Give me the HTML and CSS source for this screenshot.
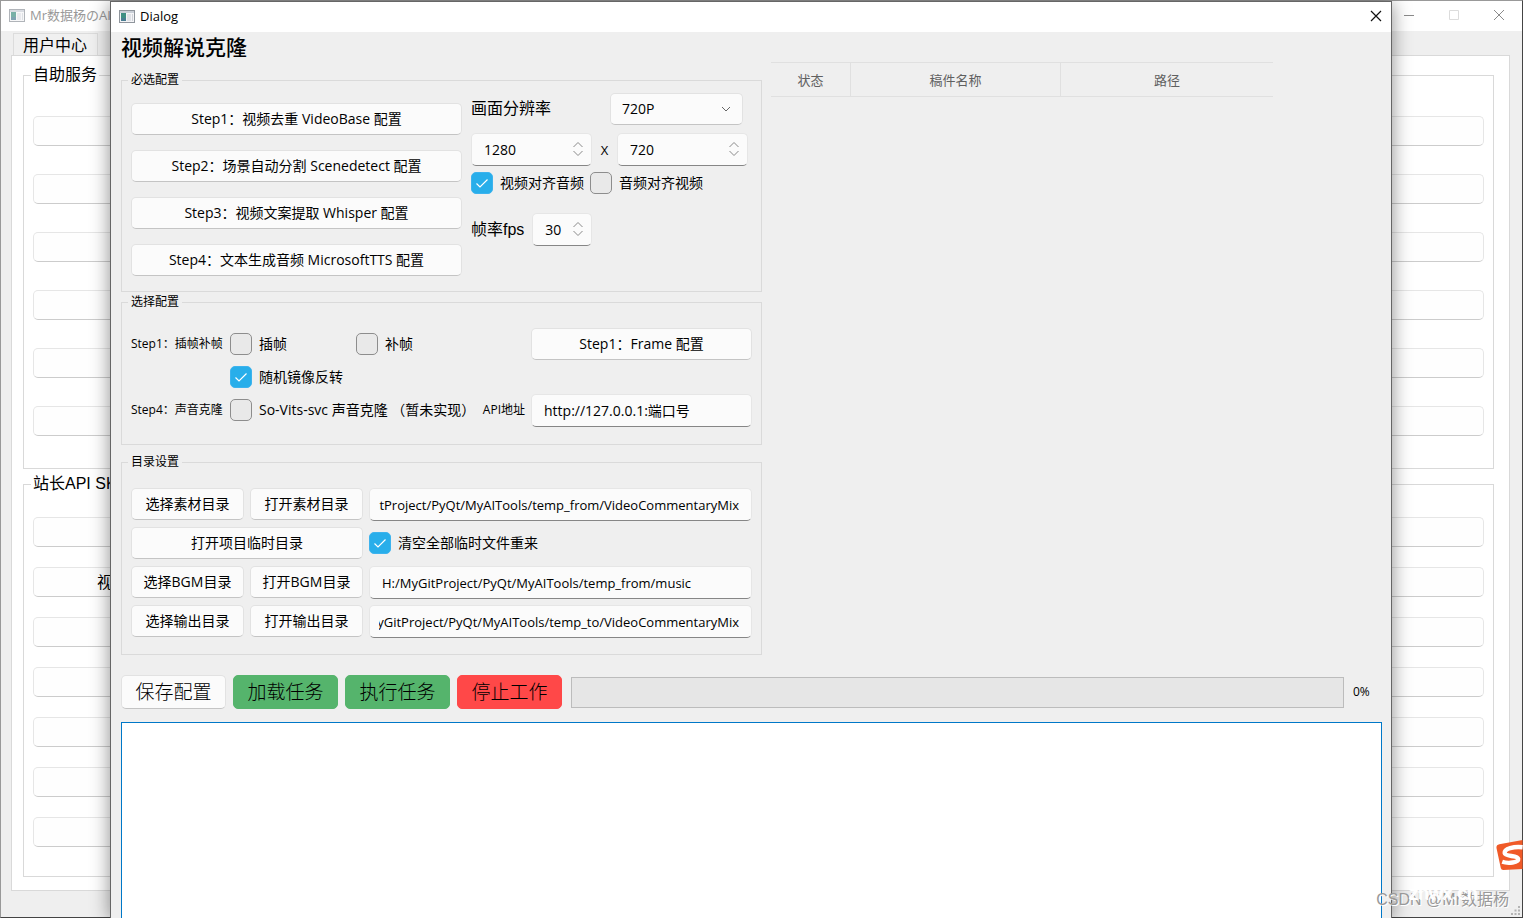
FILE: index.html
```html
<!DOCTYPE html>
<html lang="zh-CN">
<head>
<meta charset="utf-8">
<title>Dialog</title>
<link rel="stylesheet" href="styles.css">
</head>
<body>
<svg class="defs" aria-hidden="true">
  <symbol id="app-icon" viewBox="0 0 16 13">
    <rect x="0.5" y="0.5" width="15" height="12" fill="#f4f4f6" stroke="#8f959c"/>
    <rect x="1" y="1" width="14" height="2" fill="#c9ced6"/>
    <rect x="2" y="3" width="5" height="8" fill="#3f8f83"/>
    <rect x="2" y="8" width="5" height="3" fill="#4a7d92"/>
    <rect x="8" y="4" width="4" height="7" fill="#dfe1e6"/>
    <rect x="13" y="4" width="1" height="7" fill="#d0d3d9"/>
  </symbol>
  <symbol id="spin" viewBox="0 0 12 16">
    <path d="M1.5 6 6 1.5 10.500 6M1.500 10 6 14.500 10.500 10" fill="none" stroke="#8a8a8a"/>
  </symbol>
</svg>

<main class="main-window">
  <header class="title-bar title-bar-inactive">
    <svg class="app-icon"><use href="#app-icon"/></svg>
    <span class="title-text">Mr数据杨のAI工</span>
    <button class="window-button" type="button" aria-label="最小化"><svg viewBox="0 0 12 12"><path d="M1 6.500H11" stroke="#8a8a8a"/></svg></button>
    <button class="window-button" type="button" aria-label="最大化"><svg viewBox="0 0 12 12"><path d="M1.500 1.500H10.500V10.500H1.500Z" fill="none" stroke="#dcdcdc"/></svg></button>
    <button class="window-button" type="button" aria-label="关闭"><svg viewBox="0 0 12 12"><path d="M1 1 11 11M11 1 1 11" stroke="#8a8a8a"/></svg></button>
  </header>
  <nav class="tabs"><button class="tab" type="button">用户中心</button></nav>
  <section class="tab-pane">
    <fieldset class="panel panel-service">
      <legend>自助服务</legend>
      <button class="wide-button" type="button" aria-label="服务 1"></button>
      <button class="wide-button" type="button" aria-label="服务 2"></button>
      <button class="wide-button" type="button" aria-label="服务 3"></button>
      <button class="wide-button" type="button" aria-label="服务 4"></button>
      <button class="wide-button" type="button" aria-label="服务 5"></button>
      <button class="wide-button" type="button" aria-label="服务 6"></button>
    </fieldset>
    <fieldset class="panel panel-api">
      <legend>站长API SK</legend>
      <button class="wide-button" type="button" aria-label="接口 1"></button>
      <button class="wide-button" type="button">视</button>
      <button class="wide-button" type="button" aria-label="接口 3"></button>
      <button class="wide-button" type="button" aria-label="接口 4"></button>
      <button class="wide-button" type="button" aria-label="接口 5"></button>
      <button class="wide-button" type="button" aria-label="接口 6"></button>
      <button class="wide-button" type="button" aria-label="接口 7"></button>
    </fieldset>
  </section>
  <svg class="grip" viewBox="0 0 10 10" aria-hidden="true"><path d="M7 0h2v2H7zM3.500 3.500h2v2h-2zM7 3.500h2v2H7zM0 7h2v2H0zM3.500 7h2v2h-2zM7 7h2v2H7z" fill="#b4b4b4"/></svg>
</main>

<section class="dialog" role="dialog" aria-label="Dialog">
  <header class="title-bar">
    <svg class="app-icon"><use href="#app-icon"/></svg>
    <span class="title-text">Dialog</span>
    <button class="close-button" type="button" aria-label="关闭"><svg viewBox="0 0 12 12"><path d="M1 1 11 11M11 1 1 11" stroke="#111" stroke-width="1.200"/></svg></button>
  </header>
  <div class="dialog-body">
    <h1>视频解说克隆</h1>
    <div class="columns">
      <div class="settings">
        <fieldset class="group group-required">
          <legend>必选配置</legend>
          <div class="step-buttons">
            <button class="button" type="button">Step1：视频去重 VideoBase 配置</button>
            <button class="button" type="button">Step2：场景自动分割 Scenedetect 配置</button>
            <button class="button" type="button">Step3：视频文案提取 Whisper 配置</button>
            <button class="button" type="button">Step4：文本生成音频 MicrosoftTTS 配置</button>
          </div>
          <div class="video-options">
            <div class="row row-resolution">
              <label class="big-label" for="resolution">画面分辨率</label>
              <span class="select-wrap">
                <select class="select" id="resolution"><option>720P</option></select>
                <svg class="chevron" viewBox="0 0 10 6"><path d="M1 1 5 5 9 1" fill="none" stroke="#666"/></svg>
              </span>
            </div>
            <div class="row row-size">
              <span class="spin-wrap spin-width"><input class="field" type="number" value="1280" aria-label="宽度"><svg class="spin"><use href="#spin"/></svg></span>
              <span class="times">X</span>
              <span class="spin-wrap spin-height"><input class="field" type="number" value="720" aria-label="高度"><svg class="spin"><use href="#spin"/></svg></span>
            </div>
            <div class="row row-align">
              <label class="check"><input type="checkbox" checked>视频对齐音频</label>
              <label class="check"><input type="checkbox">音频对齐视频</label>
            </div>
            <div class="row row-fps">
              <label class="big-label" for="fps">帧率fps</label>
              <span class="spin-wrap spin-fps"><input class="field" id="fps" type="number" value="30"><svg class="spin"><use href="#spin"/></svg></span>
            </div>
          </div>
        </fieldset>

        <fieldset class="group group-optional">
          <legend>选择配置</legend>
          <div class="option-row">
            <span class="small-label">Step1：插帧补帧</span>
            <label class="check check-column"><input type="checkbox">插帧</label>
            <label class="check"><input type="checkbox">补帧</label>
            <button class="button option-end" type="button">Step1：Frame 配置</button>
          </div>
          <div class="option-row">
            <span class="small-label"></span>
            <label class="check"><input type="checkbox" checked>随机镜像反转</label>
          </div>
          <div class="option-row">
            <span class="small-label">Step4：声音克隆</span>
            <label class="check"><input type="checkbox">So-Vits-svc 声音克隆 （暂未实现）</label>
            <label class="api-label" for="api">API地址</label>
            <input class="field option-field" id="api" type="text" value="http://127.0.0.1:端口号">
          </div>
        </fieldset>

        <fieldset class="group group-folders">
          <legend>目录设置</legend>
          <button class="button" type="button">选择素材目录</button>
          <button class="button" type="button">打开素材目录</button>
          <input class="field field-path field-end" type="text" aria-label="素材目录" value="H:/MyGitProject/PyQt/MyAITools/temp_from/VideoCommentaryMix">
          <button class="button button-span" type="button">打开项目临时目录</button>
          <label class="check"><input type="checkbox" checked>清空全部临时文件重来</label>
          <button class="button" type="button">选择BGM目录</button>
          <button class="button" type="button">打开BGM目录</button>
          <input class="field field-path" type="text" aria-label="BGM目录" value="H:/MyGitProject/PyQt/MyAITools/temp_from/music">
          <button class="button" type="button">选择输出目录</button>
          <button class="button" type="button">打开输出目录</button>
          <input class="field field-path field-end" type="text" aria-label="输出目录" value="H:/MyGitProject/PyQt/MyAITools/temp_to/VideoCommentaryMix">
        </fieldset>
      </div>

      <table class="drafts">
        <thead><tr><th class="col-state">状态</th><th class="col-name">稿件名称</th><th class="col-path">路径</th></tr></thead>
      </table>
    </div>

    <div class="actions">
      <button class="button action" type="button">保存配置</button>
      <button class="button action action-go" type="button">加载任务</button>
      <button class="button action action-go" type="button">执行任务</button>
      <button class="button action action-stop" type="button">停止工作</button>
      <div class="progress" role="progressbar" aria-valuenow="0" aria-label="进度"></div>
      <span class="percent">0%</span>
    </div>
    <textarea class="log" aria-label="日志"></textarea>
  </div>
</section>

<svg class="ime-logo" viewBox="0 0 27 32" aria-hidden="true">
  <path d="M3 4.500 27 0V30L7 31Q5 31 4.500 29L0 8Q0 5 3 4.500Z" fill="#f05a28"/>
  <path d="M27 7.500C18 6.500 8 9 8.500 13.500C9 17.500 22 15.500 22.500 19.500C23 23.500 12 24.500 6 22.500" fill="none" stroke="#fff" stroke-width="4.500"/>
</svg>
<div class="watermark"><span class="watermark-light">znwx.cn</span>CSDN @Mr数据杨</div>
</body>
</html>
```

FILE: styles.css
```css
* {
  box-sizing: border-box;
}

body {
  position: relative;
  height: 100vh;
  margin: 0;
  overflow: hidden;
  color: #000;
  background: #efefef;
  font: 14px/20px "Open Sans", "Noto Sans CJK SC", sans-serif;
}

button,
input,
select,
textarea {
  margin: 0;
  color: inherit;
  font: inherit;
}

fieldset {
  min-width: 0;
  margin: 0;
}

.defs {
  position: absolute;
  width: 0;
  height: 0;
}

/* Main window */
.main-window {
  height: 100vh;
  overflow: hidden;
  border: 1px solid #999;
  border-right-color: #444;
  border-bottom-color: #444;
  background: #efefef;
}

.title-bar {
  display: flex;
  align-items: center;
  height: 30px;
  padding-bottom: 2px;
  padding-left: 8px;
  background: #fff;
  font-size: 13px;
}

.title-bar-inactive {
  padding-right: 1px;
  color: #999;
}

.title-bar-inactive .app-icon {
  opacity: 0.7;
}

.title-text {
  flex: 1;
  white-space: nowrap;
}

.app-icon {
  width: 16px;
  height: 13px;
  margin-right: 5px;
}

.window-button,
.close-button {
  display: flex;
  align-items: center;
  justify-content: center;
  width: 45px;
  height: 28px;
  padding: 0;
  border: 0;
  background: none;
}

.close-button {
  width: 30px;
}

.window-button svg,
.close-button svg {
  width: 12px;
  height: 12px;
}

.tabs {
  padding: 2px 12px 0;
}

.tab {
  display: block;
  height: 22px;
  padding: 0 10px 0 9px;
  border: 1px solid #dcdcdc;
  border-bottom: 0;
  background: #f0f0f0;
  font-size: 16px;
  line-height: 20px;
}

.tab-pane {
  margin: 0 12px 0 10px;
  padding: 9px 15px 13px 11px;
  border: 1px solid #d9d9d9;
  background: #fff;
}

.panel {
  display: grid;
  padding: 31px 9px;
  border: 1px solid #d9d9d9;
}

.panel legend {
  margin-left: -2px;
  padding: 0 2px;
  font-family: "Liberation Sans", "Noto Sans CJK SC", sans-serif;
  font-size: 16px;
  line-height: 20px;
}

.panel-service {
  gap: 28px;
  padding-bottom: 32px;
}

.panel-api {
  gap: 20px;
  margin-top: 5px;
  padding-top: 23px;
  padding-bottom: 29px;
}

.wide-button {
  height: 30px;
  padding: 0 63px;
  border: 1px solid #e6e6e6;
  border-bottom-color: #ccc;
  border-radius: 5px;
  background: #fefefe;
  font-size: 16px;
  line-height: 20px;
  text-align: left;
}

.grip {
  position: absolute;
  right: 2px;
  bottom: 2px;
  width: 10px;
  height: 10px;
}

/* Dialog */
.dialog {
  position: absolute;
  top: 1px;
  right: 131px;
  bottom: 0;
  left: 110px;
  display: flex;
  flex-direction: column;
  border: 1px solid #666;
  border-bottom: 0;
  background: #efefef;
  box-shadow: 0 2px 18px rgba(0, 0, 0, 0.45);
}

.dialog-body {
  flex: 1;
  display: flex;
  flex-direction: column;
  padding: 0 9px 0 10px;
}

h1 {
  margin: 0;
  font-size: 21px;
  font-weight: 500;
  line-height: 30px;
}

.columns {
  display: flex;
  align-items: flex-start;
  gap: 9px;
}

.settings {
  flex: 0 0 641px;
  padding-top: 10px;
}

.group {
  padding: 18px 9px;
  border: 1px solid #dadada;
}

.group legend {
  margin-left: -3px;
  padding: 0 3px;
  font-size: 12px;
  line-height: 16px;
}

.button {
  height: 32px;
  padding: 0 4px;
  border: 1px solid #e2e2e2;
  border-bottom-color: #c4c4c4;
  border-radius: 5px;
  background: #fbfbfb;
  white-space: nowrap;
}

.field {
  width: 100%;
  height: 33px;
  padding: 0 10px 0 12px;
  border: 1px solid #e6e6e6;
  border-bottom-color: #868686;
  border-radius: 5px;
  background: #fbfbfb;
}

.field-path {
  font-size: 13px;
}

.field-end {
  padding: 0 12px 0 9px;
  direction: rtl;
}

.group-required {
  display: grid;
  grid-template-columns: 331px 1fr;
  column-gap: 9px;
  padding-top: 5px;
  padding-bottom: 15px;
}

.step-buttons {
  display: grid;
  gap: 15px;
  padding-top: 10px;
}

.row {
  display: flex;
  align-items: center;
}

.big-label {
  font-family: "Liberation Sans", "Noto Sans CJK SC", sans-serif;
  font-size: 16px;
}

.row-resolution {
  justify-content: space-between;
  padding-right: 9px;
}

.select-wrap,
.spin-wrap {
  position: relative;
}

.select-wrap {
  width: 133px;
}

.select {
  display: block;
  width: 100%;
  height: 32px;
  padding: 0 11px;
  border: 1px solid #e2e2e2;
  border-bottom-color: #c4c4c4;
  border-radius: 5px;
  background: #fbfbfb;
  appearance: none;
}

.chevron {
  position: absolute;
  top: 13px;
  right: 12px;
  width: 10px;
  height: 6px;
  pointer-events: none;
}

.spin-wrap .field {
  display: block;
  appearance: textfield;
}

.field::-webkit-inner-spin-button {
  display: none;
}

.spin {
  position: absolute;
  top: 8px;
  right: 8px;
  width: 12px;
  height: 16px;
  pointer-events: none;
}

.row-size {
  margin-top: 8px;
}

.spin-width {
  width: 121px;
}

.spin-height {
  width: 131px;
}

.spin-fps {
  width: 60px;
}

.times {
  width: 25px;
  font-size: 13px;
  text-align: center;
}

.row-align {
  gap: 6px;
  margin-top: 6px;
}

.row-fps {
  gap: 8px;
  margin-top: 19px;
}

.check {
  display: flex;
  align-items: center;
  gap: 7px;
  white-space: nowrap;
}

.check input {
  flex: none;
  width: 22px;
  height: 22px;
  border: 1px solid #8d8d8d;
  border-radius: 5px;
  background: #e9e9e9;
  appearance: none;
}

.check input:checked {
  border-color: #3db3ee;
  background: #28aeea url("data:image/svg+xml,%3Csvg xmlns='http://www.w3.org/2000/svg' viewBox='0 0 20 20'%3E%3Cpath d='M4.500 10.500 8 14 15.500 6.500' fill='none' stroke='white' stroke-width='1.200'/%3E%3C/svg%3E") center / 20px 20px no-repeat;
}

.group-optional {
  display: grid;
  gap: 1px;
  margin-top: 2px;
}

.option-row {
  display: flex;
  align-items: center;
  height: 32px;
}

.small-label {
  flex: none;
  width: 99px;
  font-size: 12px;
  white-space: nowrap;
}

.check-column {
  width: 126px;
}

.option-end {
  width: 221px;
  margin-left: auto;
}

.option-field {
  width: 221px;
}

.api-label {
  margin-right: 6px;
  margin-left: auto;
  font-size: 12px;
}

.group-folders {
  display: grid;
  grid-template-columns: 113px 113px 1fr;
  grid-auto-rows: 32px;
  gap: 7px 6px;
  margin-top: 9px;
  padding-bottom: 17px;
}

.button-span {
  grid-column: span 2;
}

.drafts {
  width: 502px;
  border-top: 1px solid #e0e0e0;
  border-bottom: 1px solid #e0e0e0;
  border-spacing: 0;
  table-layout: fixed;
}

.drafts th {
  height: 33px;
  padding: 0;
  color: #606060;
  font-size: 13px;
  font-weight: 400;
}

.drafts th + th {
  border-left: 1px solid #e0e0e0;
}

.col-state {
  width: 79px;
}

.col-name {
  width: 210px;
}

.actions {
  display: flex;
  align-items: center;
  gap: 7px;
  margin-top: 20px;
}

.action {
  width: 105px;
  height: 34px;
  font-size: 19px;
  font-weight: 300;
  line-height: 24px;
}

.action-go {
  border-color: #55b46c;
  background: #55b46c;
}

.action-stop {
  border-color: #ff4848;
  background: #ff4848;
}

.progress {
  flex: 1;
  height: 31px;
  margin-left: 2px;
  border: 1px solid #bcbcbc;
  background: #e6e6e6;
}

.percent {
  width: 31px;
  padding-left: 2px;
  font-size: 12px;
}

.log {
  flex: 1;
  width: 100%;
  margin-top: 13px;
  border: 1px solid #0078c8;
  border-bottom: 0;
  outline: 0;
  background: #fff;
  appearance: none;
  resize: none;
}

/* Overlays */
.ime-logo {
  position: absolute;
  top: 840px;
  right: 0;
  width: 27px;
  height: 31px;
}

.watermark {
  position: absolute;
  right: 14px;
  bottom: 8px;
  color: #999;
  font: 16px/20px "Liberation Sans", "Noto Sans CJK SC", sans-serif;
  text-shadow: 1px 1px 0 #fff;
}

.watermark-light {
  position: absolute;
  top: -7px;
  left: 32px;
  color: #fff;
  font-size: 19px;
}
```
